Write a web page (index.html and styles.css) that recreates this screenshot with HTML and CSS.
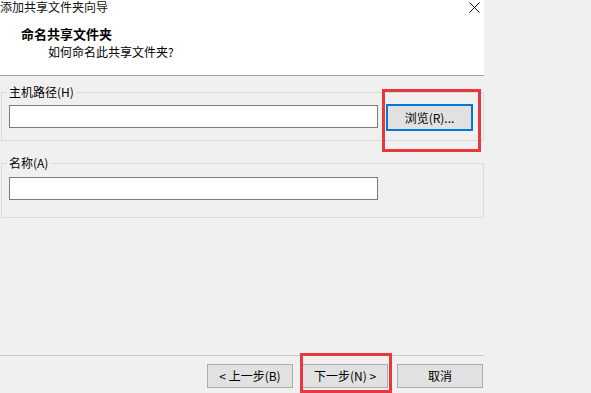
FILE: index.html
```html
<!DOCTYPE html>
<html lang="zh-CN">
<head>
<meta charset="utf-8">
<title>添加共享文件夹向导</title>
<link rel="stylesheet" href="styles.css">
</head>
<body>
<div class="dialog">
  <div class="header">
    <div class="titlebar">
      <span class="title">添加共享文件夹向导</span>
      <svg class="close" width="11" height="11" viewBox="0 0 11 11"><path d="M0.5 0.5 L10.5 10.5 M10.5 0.5 L0.5 10.5" stroke="#111" stroke-width="1" fill="none"/></svg>
    </div>
    <div class="h1">命名共享文件夹</div>
    <div class="h2">如何命名此共享文件夹?</div>
  </div>
  <div class="body">
    <fieldset class="group g1">
      <legend>主机路径(H)</legend>
      <div class="row">
        <div class="input wide"></div>
        <button class="btn browse">浏览(R)...</button>
      </div>
    </fieldset>
    <fieldset class="group g2">
      <legend>名称(A)</legend>
      <div class="input wide"></div>
    </fieldset>
  </div>
  <div class="footer">
    <button class="btn nav">&lt; 上一步(B)</button>
    <button class="btn nav">下一步(N) &gt;</button>
    <button class="btn nav">取消</button>
  </div>
  <div class="mark mark1"></div>
  <div class="mark mark2"></div>
</div>
</body>
</html>
```
FILE: styles.css
```css
html, body {
  margin: 0;
  padding: 0;
}
body {
  background: #f0f0f0;
  font-family: "Noto Sans CJK SC", "Microsoft YaHei", sans-serif;
  font-size: 12px;
  color: #000;
  width: 591px;
  height: 393px;
  overflow: hidden;
}
.dialog {
  position: relative;
  width: 484px;
  height: 393px;
  display: flex;
  flex-direction: column;
  background: #f0f0f0;
}
.header {
  background: #fff;
  height: 75px;
  border-bottom: 1px solid #a0a0a0;
  flex: none;
}
.titlebar {
  height: 14px;
  line-height: 14px;
  display: flex;
  justify-content: space-between;
  align-items: center;
}
.title {
  margin-left: 0;
  color: #111;
}
.close {
  margin-right: 4px;
  margin-top: 1px;
}
.h1 {
  font-weight: bold;
  font-size: 13px;
  line-height: 16px;
  margin-top: 12px;
  padding-left: 21px;
}
.h2 {
  line-height: 16px;
  margin-top: 2px;
  padding-left: 48px;
}
.body {
  display: flex;
  flex-direction: column;
  padding-top: 8px;
}
.group {
  margin: 0 0 0 1px;
  border: 1px solid #dadada;
  padding: 0 7px;
  min-width: 0;
}
.group legend {
  padding: 0 2px;
  margin-left: -2px;
  line-height: 16px;
  font-size: 12px;
}
.g1 {
  padding-top: 4px;
  padding-bottom: 9px;
}
.g2 {
  margin-top: 14px;
  padding-top: 6px;
  padding-bottom: 17px;
}
.row {
  display: flex;
  align-items: flex-start;
}
.input {
  box-sizing: border-box;
  height: 23px;
  background: #fff;
  border: 1px solid #7a7a7a;
}
.input.wide {
  width: 369px;
}
.g1 .input {
  margin-top: 1px;
}
.btn {
  box-sizing: border-box;
  font-family: "Noto Sans CJK SC", "Microsoft YaHei", sans-serif;
  font-size: 12px;
  color: #000;
  background: #e1e1e1;
  border: 1px solid #adadad;
  padding: 0;
  margin: 0;
  line-height: 16px;
}
.browse {
  width: 87px;
  height: 27px;
  margin-left: 8px;
  border: 2px solid #0078d7;
}
.footer {
  margin-top: auto;
  height: 37px;
  border-top: 1px solid #c9c9c9;
  box-sizing: content-box;
  display: flex;
  justify-content: flex-end;
  align-items: flex-start;
  gap: 9px;
  padding-top: 0;
  padding-right: 1px;
}
.nav {
  width: 86px;
  height: 24px;
  margin-top: 8px;
}
.mark {
  position: absolute;
  box-sizing: border-box;
  border: 3px solid #e8383d;
}
.mark1 {
  left: 382px;
  top: 89px;
  width: 99px;
  height: 63px;
}
.mark2 {
  left: 300px;
  top: 353px;
  width: 92px;
  height: 40px;
}
```
